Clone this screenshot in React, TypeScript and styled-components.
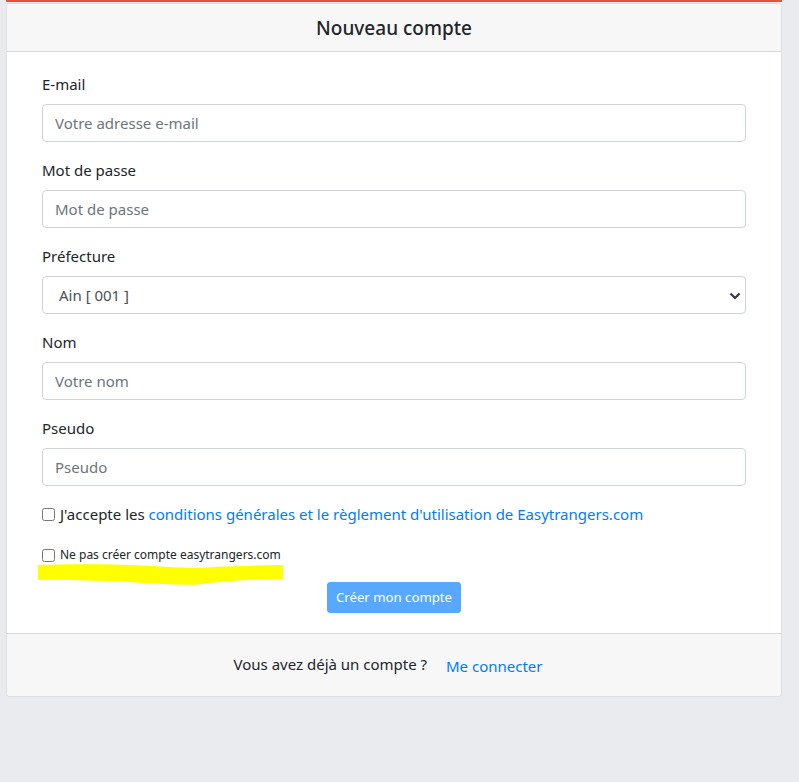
import React from 'react';
import styled, { createGlobalStyle } from 'styled-components';

const Global = createGlobalStyle`
  html, body { margin: 0; padding: 0; background: #e9ebee; }
  body {
    font-family: "Noto Sans", "Segoe UI", sans-serif;
    color: #212529;
    font-size: 15px;
    line-height: 1.5;
  }
  * { box-sizing: border-box; }
`;

const Page = styled.div`
  width: 799px;
  min-height: 782px;
  background: #e9ebee;
`;

const TopStrip = styled.div`
  margin-left: 6px;
  width: 776px;
  height: 2px;
  background: #e5533d;
`;

const Card = styled.div`
  margin: 1px 17px 0 6px;
  background: #ffffff;
  border: 1px solid rgba(0, 0, 0, 0.125);
  border-radius: 4px;
  overflow: hidden;
`;

const Header = styled.div`
  background: #f7f7f7;
  border-bottom: 1px solid rgba(0, 0, 0, 0.125);
  padding: 12px 20px 11px;
  text-align: center;
`;

const Title = styled.h5`
  margin: 0;
  font-size: 19px;
  font-weight: 500;
  line-height: 24px;
`;

const Body = styled.div`
  padding: 20px 35px;
`;

const Group = styled.div`
  margin-bottom: 16px;
`;

const Label = styled.label`
  display: block;
  margin-bottom: 8px;
  line-height: 24px;
`;

const Input = styled.input`
  display: block;
  width: 100%;
  height: 38px;
  padding: 6px 12px;
  font-family: inherit;
  font-size: 15px;
  line-height: 24px;
  color: #495057;
  background: #ffffff;
  border: 1px solid #ced4da;
  border-radius: 4px;
  outline: none;
  &::placeholder { color: #6c757d; }
`;

const SelectWrap = styled.div`
  position: relative;
`;

const Select = styled.select`
  display: block;
  width: 100%;
  height: 38px;
  padding: 6px 32px 6px 16px;
  font-family: inherit;
  font-size: 15px;
  line-height: 24px;
  color: #495057;
  background: #ffffff;
  border: 1px solid #ced4da;
  border-radius: 4px;
  appearance: none;
  -webkit-appearance: none;
  outline: none;
`;

const Chevron = styled.svg`
  position: absolute;
  right: 5px;
  top: 16px;
  pointer-events: none;
`;

const CheckRow = styled.div<{ $small?: boolean }>`
  position: relative;
  display: flex;
  align-items: center;
  font-size: ${(p) => (p.$small ? '12px' : '15px')};
  line-height: ${(p) => (p.$small ? '20px' : '24px')};
  margin-top: ${(p) => (p.$small ? '19px' : '0')};
`;

const Check = styled.input`
  width: 13px;
  height: 13px;
  margin: 0 5px 0 0;
  flex: none;
`;

const Link = styled.a`
  color: #007bff;
  text-decoration: none;
`;

const Highlight = styled.svg`
  position: absolute;
  left: -4px;
  top: 19px;
  pointer-events: none;
`;

const Submit = styled.button`
  display: block;
  margin: 17px auto 0;
  padding: 4px 8px;
  font-family: inherit;
  font-size: 13.2px;
  line-height: 21px;
  color: #ffffff;
  background: #007bff;
  border: 1px solid #007bff;
  border-radius: 3px;
  opacity: 0.65;
`;

const Footer = styled.div`
  background: #f7f7f7;
  border-top: 1px solid rgba(0, 0, 0, 0.125);
  padding: 18px 20px 20px;
  text-align: center;
  line-height: 24px;
`;

const FooterLink = styled.a`
  display: inline-block;
  padding: 0 12px;
  margin-left: 3px;
  color: #007bff;
  text-decoration: none;
  position: relative;
  top: 2px;
`;

export default function App() {
  return (
    <Page>
      <Global />
      <TopStrip />
      <Card>
        <Header>
          <Title>Nouveau compte</Title>
        </Header>
        <Body>
          <Group>
            <Label>E-mail</Label>
            <Input type="email" placeholder="Votre adresse e-mail" />
          </Group>
          <Group>
            <Label>Mot de passe</Label>
            <Input type="password" placeholder="Mot de passe" />
          </Group>
          <Group>
            <Label>Préfecture</Label>
            <SelectWrap>
              <Select defaultValue="001">
                <option value="001">Ain [ 001 ]</option>
              </Select>
              <Chevron width="12" height="8" viewBox="0 0 12 8">
                <path d="M1.5 1.5 L6 6 L10.5 1.5" fill="none" stroke="#343a40" strokeWidth="2.2" />
              </Chevron>
            </SelectWrap>
          </Group>
          <Group>
            <Label>Nom</Label>
            <Input type="text" placeholder="Votre nom" />
          </Group>
          <Group>
            <Label>Pseudo</Label>
            <Input type="text" placeholder="Pseudo" />
          </Group>
          <CheckRow>
            <Check type="checkbox" />
            <span>
              J'accepte les{' '}
              <Link href="#">conditions générales et le règlement d'utilisation de Easytrangers.com</Link>
            </span>
          </CheckRow>
          <CheckRow $small>
            <Check type="checkbox" />
            <span>Ne pas créer compte easytrangers.com</span>
            <Highlight width="246" height="23" viewBox="0 0 246 23">
              <path
                d="M0 1 C 30 0, 70 0, 105 1.5 C 130 3, 150 5, 175 3 C 205 2, 225 1, 245 1 L 245 15 C 215 15, 190 17, 160 20.5 C 130 21.5, 100 18, 70 17 C 40 16, 20 16, 0 16 Z"
                fill="#ffff00"
              />
            </Highlight>
          </CheckRow>
          <Submit type="button" disabled>Créer mon compte</Submit>
        </Body>
        <Footer>
          Vous avez déjà un compte ? <FooterLink href="#">Me connecter</FooterLink>
        </Footer>
      </Card>
    </Page>
  );
}
